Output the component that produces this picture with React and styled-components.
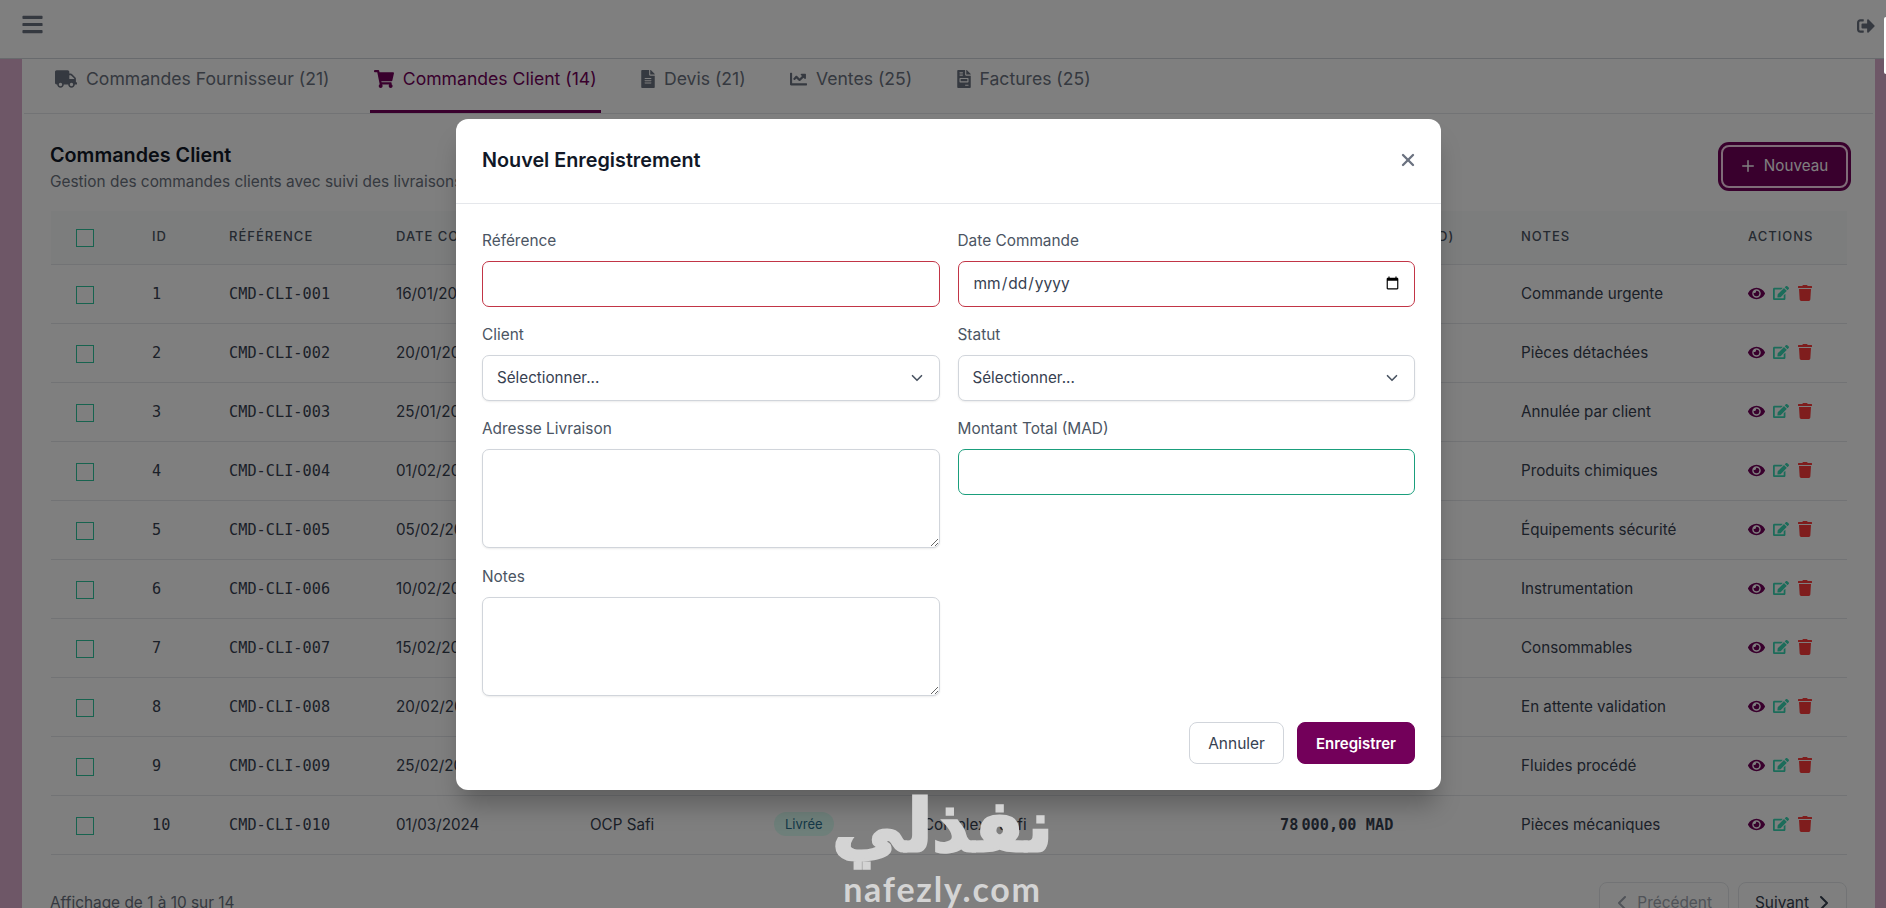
import React from "react";
import styled, { createGlobalStyle } from "styled-components";
import { ChevronLeft, ChevronRight, Plus, X } from "lucide-react";
import {
  FaBars,
  FaChartLine,
  FaEdit,
  FaEye,
  FaFileAlt,
  FaFileInvoice,
  FaShoppingCart,
  FaSignOutAlt,
  FaTrash,
  FaTruck,
} from "react-icons/fa";

const BRAND = "#73005a";

const TABS = [
  { label: "Commandes Fournisseur (21)", icon: FaTruck, iconWidth: 22 },
  {
    label: "Commandes Client (14)",
    icon: FaShoppingCart,
    iconWidth: 20,
    active: true,
  },
  { label: "Devis (21)", icon: FaFileAlt, iconWidth: 14 },
  { label: "Ventes (25)", icon: FaChartLine, iconWidth: 17 },
  { label: "Factures (25)", icon: FaFileInvoice, iconWidth: 14 },
];

const COLUMNS = [
  { label: "", width: 76 },
  { label: "ID", width: 77 },
  { label: "Référence", width: 167 },
  { label: "Date Commande", width: 194 },
  { label: "Client", width: 184 },
  { label: "Statut", width: 149 },
  { label: "Adresse Livraison", width: 357 },
  { label: "Montant Total (MAD)", width: 241 },
  { label: "Notes", width: 227 },
  { label: "Actions", width: 124 },
];

const ROWS = [
  { id: 1, date: "16/01/2024", notes: "Commande urgente" },
  { id: 2, date: "20/01/2024", notes: "Pièces détachées" },
  { id: 3, date: "25/01/2024", notes: "Annulée par client" },
  { id: 4, date: "01/02/2024", notes: "Produits chimiques" },
  { id: 5, date: "05/02/2024", notes: "Équipements sécurité" },
  { id: 6, date: "10/02/2024", notes: "Instrumentation" },
  { id: 7, date: "15/02/2024", notes: "Consommables" },
  { id: 8, date: "20/02/2024", notes: "En attente validation" },
  { id: 9, date: "25/02/2024", notes: "Fluides procédé" },
  {
    id: 10,
    date: "01/03/2024",
    client: "OCP Safi",
    status: "Livrée",
    address: "Complexe Safi",
    thousands: "78",
    amount: "000,00 MAD",
    notes: "Pièces mécaniques",
  },
];

const CHEVRON =
  "url(\"data:image/svg+xml,%3Csvg xmlns='http://www.w3.org/2000/svg' width='18' height='18' viewBox='0 0 24 24' fill='none' stroke='%234b5563' stroke-width='2.2' stroke-linecap='round' stroke-linejoin='round'%3E%3Cpath d='m6 9 6 6 6-6'/%3E%3C/svg%3E\")";

const GlobalStyle = createGlobalStyle`
  * {
    box-sizing: border-box;
  }

  body {
    margin: 0;
    overflow: hidden;
    font-family: "Inter", sans-serif;
    color: #1f2937;
  }
`;

const Page = styled.div`
  position: relative;
  height: 908px;
  overflow: hidden;
  background-color: #dcaece;
`;

const TopBar = styled.header`
  height: 59px;
  padding: 0 11px 0 21px;
  display: flex;
  align-items: flex-start;
  justify-content: space-between;
  background-color: #fff;
  border-bottom: 1px solid #d1d5db;
  color: #6b7280;
`;

const TopIcon = styled.span`
  display: flex;
  margin-top: ${(p) => p.$top}px;
  font-size: ${(p) => p.$size}px;
`;

const Panel = styled.main`
  margin: 0 11px 0 22px;
  padding: 0 2px;
  height: 900px;
  background-color: #fff;
`;

const TabBar = styled.nav`
  display: flex;
  gap: 36.3px;
  height: 55px;
  padding-left: 27px;
  border-bottom: 1px solid #e5e7eb;
`;

const Tab = styled.div`
  height: 54px;
  padding: 8px 4px 0;
  display: flex;
  gap: 9px;
  font-size: 17.6px;
  line-height: 24px;
  font-weight: 400;
  color: ${(p) => (p.$active ? BRAND : "#6b7280")};
  border-bottom: 3px solid ${(p) => (p.$active ? BRAND : "transparent")};

  svg {
    width: ${(p) => p.$iconWidth}px;
    height: 18px;
    margin-top: 3px;
  }
`;

const SectionHead = styled.section`
  display: flex;
  justify-content: space-between;
  align-items: flex-start;
  padding: 27px 25px 0 26px;
`;

const Title = styled.h2`
  margin: 0;
  font-size: 19.8px;
  line-height: 28px;
  font-weight: 600;
  color: #111827;
`;

const Subtitle = styled.p`
  margin: 3px 0 0;
  font-size: 15.4px;
  line-height: 20px;
  color: #6b7280;
  white-space: nowrap;
`;

const NewButton = styled.button`
  margin-top: 4px;
  height: 43px;
  width: 127px;
  padding: 0 2px 2px 0;
  display: flex;
  align-items: center;
  justify-content: center;
  gap: 7px;
  border: 2px solid #ffd8f0;
  border-radius: 8px;
  box-shadow: 0 0 0 3px ${BRAND};
  background-color: ${BRAND};
  color: #fff;
  font-family: inherit;
  font-size: 15.2px;
  font-weight: 400;
`;

const Table = styled.table`
  width: 1796px;
  margin: 19px 0 0 27px;
  table-layout: fixed;
  border-collapse: collapse;
`;

const HeadCell = styled.th`
  height: 53px;
  padding: 0 0 2px 25px;
  text-align: left;
  background-color: #f9fafb;
  border-bottom: 1px solid #e5e7eb;
  font-size: 13px;
  font-weight: 500;
  letter-spacing: 1px;
  text-transform: uppercase;
  color: #4b5563;
  white-space: nowrap;
`;

const Cell = styled.td`
  height: 59px;
  padding: ${(p) => (p.$mono ? "1px 0 0 25px" : "0 0 1px 25px")};
  border-bottom: 1px solid #e5e7eb;
  font-size: 15.2px;
  color: #374151;
  white-space: nowrap;
  font-family: ${(p) =>
    p.$mono ? '"DejaVu Sans Mono", monospace' : "inherit"};
  font-weight: ${(p) => (p.$bold ? 700 : 400)};
  letter-spacing: ${(p) => (p.$mono ? "0.05px" : "0")};
`;

const NarrowGap = styled.span`
  display: inline-block;
  width: 3px;
`;

const Check = styled.input.attrs({ type: "checkbox" })`
  appearance: none;
  display: block;
  width: 18px;
  height: 18px;
  margin: 3px 0 0;
  background-color: #fff;
  border: 1px solid #2fc79f;
`;

const Badge = styled.span`
  display: inline-block;
  padding: 0 11px;
  height: 24px;
  line-height: 24px;
  border-radius: 12px;
  background-color: #dcfff4;
  color: #2a7090;
  font-size: 13px;
  font-weight: 400;
`;

const Actions = styled.div`
  display: flex;
  align-items: center;
  gap: 8px;

  svg {
    display: block;
  }
`;

const ActionIcon = styled.span`
  color: ${(p) => p.$color};
  font-size: ${(p) => p.$size}px;
`;

const Pagination = styled.div`
  display: flex;
  justify-content: space-between;
  align-items: center;
  margin-top: 27px;
  padding: 0 26px;
`;

const PageInfo = styled.span`
  font-size: 15.4px;
  color: #6b7280;
`;

const PageButtons = styled.div`
  display: flex;
  gap: 9px;
`;

const PageButton = styled.button`
  height: 42px;
  padding: 0 16px;
  display: flex;
  align-items: center;
  gap: 9px;
  border: 1px solid #e5e7eb;
  border-radius: 8px;
  background-color: #fff;
  font-family: inherit;
  font-size: 15.4px;
  font-weight: 400;
  color: ${(p) => (p.disabled ? "#a0a6b0" : "#374151")};

  svg {
    margin: 0 -6px;
  }
`;

const Backdrop = styled.div`
  position: absolute;
  inset: 0;
  padding: 119px 0 0 11px;
  display: flex;
  align-items: flex-start;
  justify-content: center;
  background-color: rgba(0, 0, 0, 0.5);
`;

const Modal = styled.div`
  width: 985px;
  background-color: #fff;
  border-radius: 12px;
  box-shadow: 0 20px 25px -5px rgba(0, 0, 0, 0.25);
`;

const ModalHead = styled.div`
  height: 85px;
  padding: 0 26px 2px;
  display: flex;
  align-items: center;
  justify-content: space-between;
  border-bottom: 1px solid #e5e7eb;
`;

const ModalTitle = styled.h3`
  margin: 0;
  font-size: 19.8px;
  font-weight: 600;
  color: #111827;
`;

const CloseButton = styled.button`
  margin-right: -3px;
  padding: 0;
  display: flex;
  border: 0;
  background: none;
  color: #6b7280;
`;

const Form = styled.form`
  padding: 26px;
`;

const Fields = styled.div`
  display: grid;
  grid-template-columns: 1fr 1fr;
  column-gap: 18px;
  row-gap: 17.5px;
  align-items: start;
`;

const Label = styled.label`
  display: block;
  margin-bottom: 9px;
  font-size: 15.4px;
  line-height: 22px;
  font-weight: 400;
  color: #4b5563;
`;

const fieldBorder = (p) => {
  if (p.$state === "error") return "#c23546";
  if (p.$state === "ok") return "#1a9e7c";
  return "#d1d5db";
};

const Input = styled.input`
  display: block;
  width: 100%;
  height: 45.5px;
  padding: 0 12px 0 14px;
  border: 1px solid ${fieldBorder};
  border-radius: 7px;
  background-color: #fff;
  font-family: inherit;
  font-size: 15.5px;
  color: #374151;
`;

const Select = styled.select`
  appearance: none;
  display: block;
  width: 100%;
  height: 45.5px;
  padding: 0 14px;
  border: 1px solid #d1d5db;
  border-radius: 7px;
  box-shadow: 0 1px 2px rgba(0, 0, 0, 0.08);
  background: #fff ${CHEVRON} no-repeat right 13px center;
  font-family: inherit;
  font-size: 15.2px;
  color: #374151;
`;

const TextArea = styled.textarea`
  display: block;
  width: 100%;
  height: 99px;
  padding: 10px 14px;
  border: 1px solid #d1d5db;
  border-radius: 7px;
  box-shadow: 0 1px 2px rgba(0, 0, 0, 0.08);
  font-family: inherit;
  font-size: 15px;
  resize: vertical;
`;

const ModalFoot = styled.div`
  display: flex;
  justify-content: flex-end;
  gap: 13px;
  margin-top: 26.5px;
`;

const FootButton = styled.button`
  height: 42px;
  padding: 0 18px;
  border: 1px solid ${(p) => (p.$primary ? BRAND : "#d1d5db")};
  border-radius: 8px;
  background-color: ${(p) => (p.$primary ? BRAND : "#fff")};
  color: ${(p) => (p.$primary ? "#fff" : "#374151")};
  font-family: inherit;
  font-size: ${(p) => (p.$primary ? 15 : 15.5)}px;
  font-weight: ${(p) => (p.$primary ? 600 : 400)};
`;

const ScrollThumb = styled.div`
  position: absolute;
  top: 17px;
  right: 0;
  width: 2px;
  height: 57px;
  border-radius: 2px 0 0 2px;
  background-color: #fff;
`;

const Watermark = styled.div`
  position: absolute;
  left: 836px;
  top: 776px;
  width: 213px;
  display: flex;
  flex-direction: column;
  align-items: center;
  color: #d4d4d4;
  pointer-events: none;
`;

const WatermarkArabic = styled.div`
  font-family: "DejaVu Sans", sans-serif;
  font-size: 72px;
  font-weight: 700;
  line-height: 100px;
  direction: rtl;
  -webkit-text-stroke: 3px #d4d4d4;
`;

const WatermarkLatin = styled.div`
  margin-top: -6px;
  font-family: "Lato", sans-serif;
  font-size: 34px;
  font-weight: 700;
  line-height: 38px;
  letter-spacing: 1.8px;
`;

function Field({ label, children }) {
  return (
    <div>
      <Label>{label}</Label>
      {children}
    </div>
  );
}

function Row({ row }) {
  return (
    <tr>
      <Cell>
        <Check />
      </Cell>
      <Cell $mono>{row.id}</Cell>
      <Cell $mono>CMD-CLI-{String(row.id).padStart(3, "0")}</Cell>
      <Cell>{row.date}</Cell>
      <Cell>{row.client}</Cell>
      <Cell>{row.status && <Badge>{row.status}</Badge>}</Cell>
      <Cell>{row.address}</Cell>
      <Cell $mono $bold>
        {row.thousands}
        {row.thousands && <NarrowGap />}
        {row.amount}
      </Cell>
      <Cell>{row.notes}</Cell>
      <Cell>
        <Actions>
          <ActionIcon $color={BRAND} $size={17}>
            <FaEye />
          </ActionIcon>
          <ActionIcon $color="#38d9b5" $size={16}>
            <FaEdit />
          </ActionIcon>
          <ActionIcon $color="#ff3a3a" $size={16}>
            <FaTrash />
          </ActionIcon>
        </Actions>
      </Cell>
    </tr>
  );
}

export default function App() {
  return (
    <Page>
      <GlobalStyle />
      <TopBar>
        <TopIcon $size={23} $top={13}>
          <FaBars />
        </TopIcon>
        <TopIcon $size={18} $top={17}>
          <FaSignOutAlt />
        </TopIcon>
      </TopBar>
      <Panel>
        <TabBar>
          {TABS.map(({ label, icon: Icon, iconWidth, active }) => (
            <Tab key={label} $active={active} $iconWidth={iconWidth}>
              <Icon />
              {label}
            </Tab>
          ))}
        </TabBar>
        <SectionHead>
          <div>
            <Title>Commandes Client</Title>
            <Subtitle>
              Gestion des commandes clients avec suivi des livraisons
            </Subtitle>
          </div>
          <NewButton>
            <Plus size={18} />
            Nouveau
          </NewButton>
        </SectionHead>
        <Table>
          <colgroup>
            {COLUMNS.map((col) => (
              <col key={col.label} width={col.width} />
            ))}
          </colgroup>
          <thead>
            <tr>
              {COLUMNS.map((col) => (
                <HeadCell key={col.label}>
                  {col.label || <Check />}
                </HeadCell>
              ))}
            </tr>
          </thead>
          <tbody>
            {ROWS.map((row) => (
              <Row key={row.id} row={row} />
            ))}
          </tbody>
        </Table>
        <Pagination>
          <PageInfo>Affichage de 1 à 10 sur 14</PageInfo>
          <PageButtons>
            <PageButton disabled>
              <ChevronLeft size={24} />
              Précédent
            </PageButton>
            <PageButton>
              Suivant
              <ChevronRight size={24} />
            </PageButton>
          </PageButtons>
        </Pagination>
      </Panel>
      <Backdrop>
        <Modal>
          <ModalHead>
            <ModalTitle>Nouvel Enregistrement</ModalTitle>
            <CloseButton type="button">
              <X size={20} strokeWidth={2.8} />
            </CloseButton>
          </ModalHead>
          <Form>
            <Fields>
              <Field label="Référence">
                <Input $state="error" />
              </Field>
              <Field label="Date Commande">
                <Input type="date" $state="error" />
              </Field>
              <Field label="Client">
                <Select>
                  <option>Sélectionner...</option>
                </Select>
              </Field>
              <Field label="Statut">
                <Select>
                  <option>Sélectionner...</option>
                </Select>
              </Field>
              <Field label="Adresse Livraison">
                <TextArea />
              </Field>
              <Field label="Montant Total (MAD)">
                <Input $state="ok" />
              </Field>
              <Field label="Notes">
                <TextArea />
              </Field>
            </Fields>
            <ModalFoot>
              <FootButton type="button">Annuler</FootButton>
              <FootButton type="button" $primary>
                Enregistrer
              </FootButton>
            </ModalFoot>
          </Form>
        </Modal>
      </Backdrop>
      <ScrollThumb />
      <Watermark>
        <WatermarkArabic>نفذلي</WatermarkArabic>
        <WatermarkLatin>nafezly.com</WatermarkLatin>
      </Watermark>
    </Page>
  );
}
